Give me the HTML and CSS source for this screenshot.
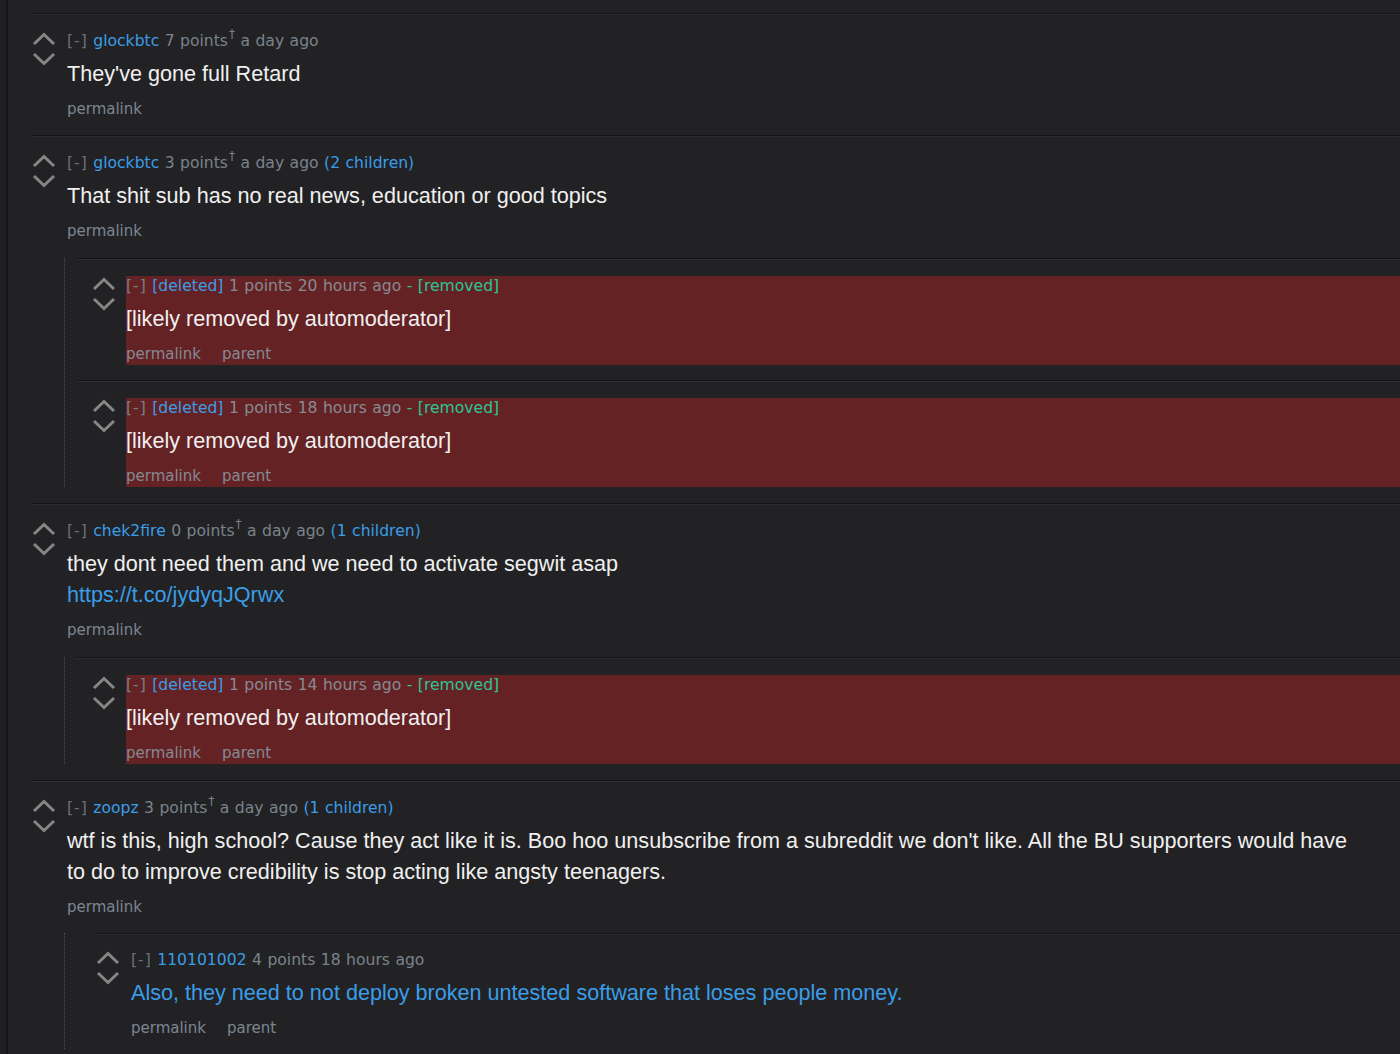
FILE: index.html
```html
<!DOCTYPE html>
<html>
<head>
<meta charset="utf-8">
<link rel="stylesheet" href="styles.css">
</head>
<body>
<div class="page">
  <div class="comment">
    <div class="row">
      <div class="arrows">
        <svg class="arrow" viewBox="0 0 24 14"><polyline points="2,12 12,2.5 22,12"/></svg>
        <svg class="arrow" viewBox="0 0 24 14"><polyline points="2,2 12,11.5 22,2"/></svg>
      </div>
      <div class="entry">
        <div class="tagline"><span class="toggle">[-]</span> <a class="author">glockbtc</a> <span class="score">7 points<sup>†</sup></span> <span class="time">a day ago</span></div>
        <div class="body">They've gone full Retard</div>
        <div class="buttons"><a>permalink</a></div>
      </div>
    </div>
  </div>

  <div class="comment">
    <div class="row">
      <div class="arrows">
        <svg class="arrow" viewBox="0 0 24 14"><polyline points="2,12 12,2.5 22,12"/></svg>
        <svg class="arrow" viewBox="0 0 24 14"><polyline points="2,2 12,11.5 22,2"/></svg>
      </div>
      <div class="entry">
        <div class="tagline"><span class="toggle">[-]</span> <a class="author">glockbtc</a> <span class="score">3 points<sup>†</sup></span> <span class="time">a day ago</span> <a class="kids">(2 children)</a></div>
        <div class="body">That shit sub has no real news, education or good topics</div>
        <div class="buttons"><a>permalink</a></div>
      </div>
    </div>
    <div class="children">
      <div class="comment removed">
        <div class="row">
          <div class="arrows">
            <svg class="arrow" viewBox="0 0 24 14"><polyline points="2,12 12,2.5 22,12"/></svg>
            <svg class="arrow" viewBox="0 0 24 14"><polyline points="2,2 12,11.5 22,2"/></svg>
          </div>
          <div class="entry">
            <div class="tagline"><span class="toggle">[-]</span> <a class="author">[deleted]</a> <span class="score">1 points</span> <span class="time">20 hours ago</span> <span class="rm">- [removed]</span></div>
            <div class="body">[likely removed by automoderator]</div>
            <div class="buttons"><a>permalink</a><a>parent</a></div>
          </div>
        </div>
      </div>
      <div class="comment removed">
        <div class="row">
          <div class="arrows">
            <svg class="arrow" viewBox="0 0 24 14"><polyline points="2,12 12,2.5 22,12"/></svg>
            <svg class="arrow" viewBox="0 0 24 14"><polyline points="2,2 12,11.5 22,2"/></svg>
          </div>
          <div class="entry">
            <div class="tagline"><span class="toggle">[-]</span> <a class="author">[deleted]</a> <span class="score">1 points</span> <span class="time">18 hours ago</span> <span class="rm">- [removed]</span></div>
            <div class="body">[likely removed by automoderator]</div>
            <div class="buttons"><a>permalink</a><a>parent</a></div>
          </div>
        </div>
      </div>
    </div>
  </div>

  <div class="comment">
    <div class="row">
      <div class="arrows">
        <svg class="arrow" viewBox="0 0 24 14"><polyline points="2,12 12,2.5 22,12"/></svg>
        <svg class="arrow" viewBox="0 0 24 14"><polyline points="2,2 12,11.5 22,2"/></svg>
      </div>
      <div class="entry">
        <div class="tagline"><span class="toggle">[-]</span> <a class="author">chek2fire</a> <span class="score">0 points<sup>†</sup></span> <span class="time">a day ago</span> <a class="kids">(1 children)</a></div>
        <div class="body">they dont need them and we need to activate segwit asap<br><a class="link">https://t.co/jydyqJQrwx</a></div>
        <div class="buttons"><a>permalink</a></div>
      </div>
    </div>
    <div class="children">
      <div class="comment removed">
        <div class="row">
          <div class="arrows">
            <svg class="arrow" viewBox="0 0 24 14"><polyline points="2,12 12,2.5 22,12"/></svg>
            <svg class="arrow" viewBox="0 0 24 14"><polyline points="2,2 12,11.5 22,2"/></svg>
          </div>
          <div class="entry">
            <div class="tagline"><span class="toggle">[-]</span> <a class="author">[deleted]</a> <span class="score">1 points</span> <span class="time">14 hours ago</span> <span class="rm">- [removed]</span></div>
            <div class="body">[likely removed by automoderator]</div>
            <div class="buttons"><a>permalink</a><a>parent</a></div>
          </div>
        </div>
      </div>
    </div>
  </div>

  <div class="comment">
    <div class="row">
      <div class="arrows">
        <svg class="arrow" viewBox="0 0 24 14"><polyline points="2,12 12,2.5 22,12"/></svg>
        <svg class="arrow" viewBox="0 0 24 14"><polyline points="2,2 12,11.5 22,2"/></svg>
      </div>
      <div class="entry">
        <div class="tagline"><span class="toggle">[-]</span> <a class="author">zoopz</a> <span class="score">3 points<sup>†</sup></span> <span class="time">a day ago</span> <a class="kids">(1 children)</a></div>
        <div class="body wide">wtf is this, high school? Cause they act like it is. Boo hoo unsubscribe from a subreddit we don't like. All the BU supporters would have to do to improve credibility is stop acting like angsty teenagers.</div>
        <div class="buttons"><a>permalink</a></div>
      </div>
    </div>
    <div class="children deep">
      <div class="comment">
        <div class="row">
          <div class="arrows">
            <svg class="arrow" viewBox="0 0 24 14"><polyline points="2,12 12,2.5 22,12"/></svg>
            <svg class="arrow" viewBox="0 0 24 14"><polyline points="2,2 12,11.5 22,2"/></svg>
          </div>
          <div class="entry">
            <div class="tagline"><span class="toggle">[-]</span> <a class="author">110101002</a> <span class="score">4 points</span> <span class="time">18 hours ago</span></div>
            <div class="body blue">Also, they need to not deploy broken untested software that loses people money.</div>
            <div class="buttons"><a>permalink</a><a>parent</a></div>
          </div>
        </div>
      </div>
    </div>
  </div>
</div>
</body>
</html>
```

FILE: styles.css
```css
html, body {
  margin: 0;
  padding: 0;
  background: #202022;
  overflow: hidden;
}

.page {
  margin-left: 6px;
  border-left: 2px solid #161618;
  background: #222224;
  min-height: 1054px;
  padding: 13px 0 0 24px;
  width: 1500px;
  box-sizing: border-box;
  font-family: "DejaVu Sans", Verdana, sans-serif;
  font-size: 15px;
}

.comment {
  border-top: 1px solid #151517;
  box-shadow: inset 0 1px 0 #2e2e30;
  padding-top: 1px;
  padding-bottom: 15px;
}

.row {
  display: flex;
  padding-top: 15px;
}

.arrows {
  width: 24px;
  flex: none;
  margin-right: 11px;
  padding-top: 2px;
  display: flex;
  flex-direction: column;
  gap: 6px;
}

.arrow {
  width: 24px;
  height: 14px;
  display: block;
}

.arrow polyline {
  fill: none;
  stroke: #868686;
  stroke-width: 3;
  stroke-linejoin: miter;
}

.entry {
  flex: 1;
  min-width: 0;
}

.tagline {
  height: 22px;
  line-height: 22px;
  font-size: 15.6px;
  word-spacing: 0.5px;
  color: #7a828c;
  white-space: nowrap;
}

.toggle {
  color: #6a7078;
  letter-spacing: 1px;
}

.author, .kids {
  color: #3a9de8;
}

sup {
  font-size: 12px;
  vertical-align: top;
  line-height: 12px;
  position: relative;
  top: -2px;
  margin-left: 1px;
}

.body {
  margin-top: 6px;
  font-family: "Liberation Sans", Arial, sans-serif;
  font-size: 21.6px;
  line-height: 31px;
  color: #f0f0f0;
}

.body.wide {
  width: 1300px;
}

.body.blue {
  color: #3a9de8;
}

.link {
  color: #3a9de8;
}

.buttons {
  margin-top: 9px;
  line-height: 22px;
  height: 22px;
  color: #7c8693;
  display: flex;
  gap: 21px;
}

.children {
  margin-left: 32px;
  margin-top: 16px;
  margin-bottom: 1px;
  border-left: 1px dotted #4e4e50;
  padding-left: 11px;
}

.children .comment:last-child {
  padding-bottom: 0;
}

.children.deep {
  padding-left: 31px;
  margin-top: 15px;
}

.children.deep .comment {
  padding-bottom: 0;
}

.children.deep .row {
  padding-top: 14px;
  padding-bottom: 10px;
}

.comment.removed {
  padding-top: 17px;
  padding-bottom: 15px;
  box-shadow: inset 0 1px 0 #2e2e30;
}

.comment.removed:last-child {
  padding-bottom: 0;
}

.removed .row {
  padding-top: 0;
  padding-left: 16px;
}

.removed .arrows {
  margin-right: 10px;
  padding-top: 1px;
}

.removed .entry {
  background: #652224;
  padding-top: 1px;
}

.removed .tagline {
  height: 18px;
  line-height: 18px;
  color: #858b93;
}

.removed .toggle {
  color: #7a7f87;
}

.removed .body {
  margin-top: 8px;
}

.removed .buttons {
  color: #838a94;
}

.rm {
  color: #2cc597;
}
```
